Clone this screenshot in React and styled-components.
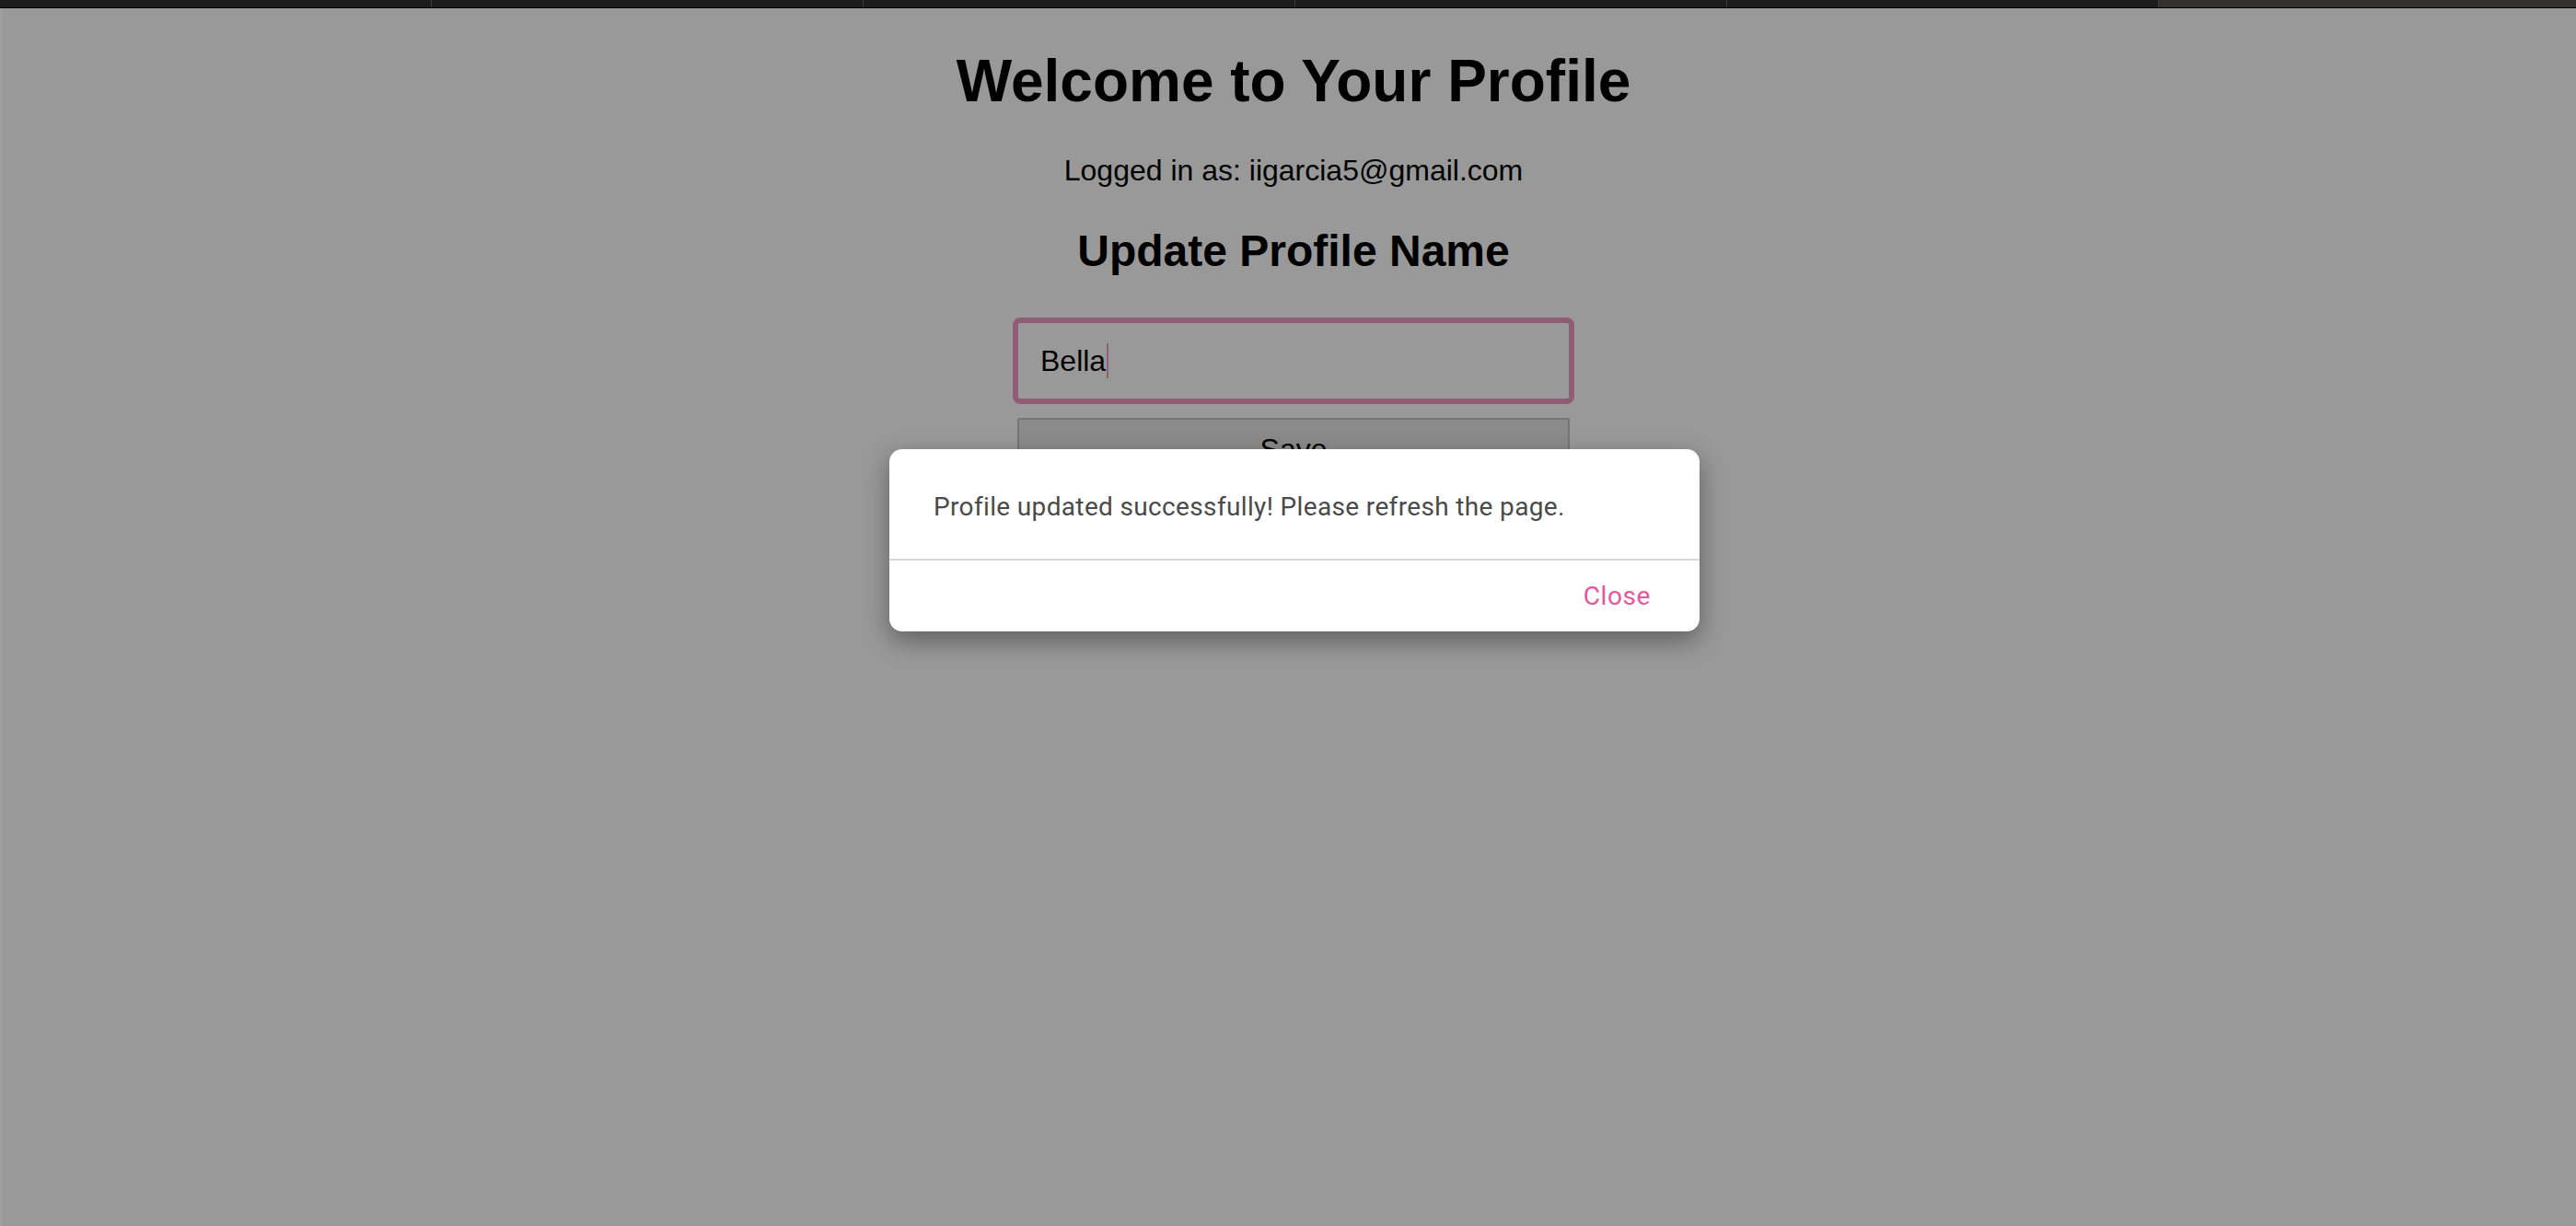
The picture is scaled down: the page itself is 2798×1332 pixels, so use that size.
import React from 'react'
import styled, { createGlobalStyle } from 'styled-components'

const GlobalStyle = createGlobalStyle`
    html, body {
        margin: 0;
        padding: 0;
        height: 100%;
        background: #ffffff;
    }
    #root {
        height: 100%;
    }
`

const Shell = styled.div`
    height: 100vh;
    display: flex;
    flex-direction: column;
    overflow: hidden;
`

const TabStrip = styled.div`
    height: 8px;
    display: flex;
    background: #1b1b1b;
    border-bottom: 1px solid #000;
    flex-shrink: 0;
`

const Tab = styled.div`
    width: ${(p) => (p.$active ? 'auto' : '468px')};
    flex: ${(p) => (p.$active ? 1 : 'none')};
    background: ${(p) => (p.$active ? '#333231' : '#1b1b1b')};
    border-right: ${(p) => (p.$active ? 'none' : '1px solid #3a3a3a')};
`

const Viewport = styled.div`
    flex: 1;
    position: relative;
    background: #ffffff;
`

const Content = styled.main`
    padding: 42px 0 0 12px;
    display: flex;
    flex-direction: column;
    align-items: center;
    font-family: "Liberation Sans", Arial, sans-serif;
    color: #000;
`

const Title = styled.h1`
    margin: 0 0 42px;
    font-size: 64px;
    line-height: 74px;
    font-weight: 700;
`

const LoggedIn = styled.p`
    margin: 0 0 41px;
    font-size: 32px;
    line-height: 37px;
`

const SubTitle = styled.h2`
    margin: 0 0 45px;
    font-size: 48px;
    line-height: 55px;
    font-weight: 700;
`

const Form = styled.form`
    display: flex;
    flex-direction: column;
    align-items: center;
    gap: 15px;
`

const Field = styled.div`
    box-sizing: border-box;
    width: 610px;
    height: 94px;
    border: 6px solid #ee9cc3;
    border-radius: 8px;
    padding: 0 24px;
    display: flex;
    align-items: center;
    font-size: 32px;
    background: #fff;
`

const Caret = styled.span`
    display: inline-block;
    width: 2px;
    height: 38px;
    margin-left: 1px;
    background: #f0a3c6;
`

const SaveButton = styled.button`
    box-sizing: border-box;
    width: 600px;
    padding: 14px 0;
    font-family: "Liberation Sans", Arial, sans-serif;
    font-size: 32px;
    line-height: 37px;
    color: #000;
    background: #e8e8e8;
    border: 2px solid #c4c4c4;
    border-radius: 2px;
`

const Backdrop = styled.div`
    position: absolute;
    inset: 0;
    background: rgba(0, 0, 0, 0.4);
    border-left: 2px solid rgba(255, 255, 255, 0.07);
    display: flex;
    justify-content: center;
    align-items: flex-start;
    padding: 479px 0 0 12px;
`

const Alert = styled.div`
    width: 880px;
    background: #fff;
    border-radius: 14px;
    box-shadow: 0 10px 28px rgba(0, 0, 0, 0.38);
    overflow: hidden;
    font-family: Roboto, "Noto Sans", sans-serif;
`

const Message = styled.p`
    margin: 0;
    padding: 42px 48px 35px;
    font-size: 28px;
    letter-spacing: 0.35px;
    line-height: 42px;
    color: #4a4a4a;
`

const Footer = styled.div`
    height: 77px;
    border-top: 2px solid #d9d9d9;
    display: flex;
    align-items: center;
    justify-content: flex-end;
    padding-right: 53px;
`

const CloseButton = styled.button`
    background: none;
    border: none;
    padding: 0;
    font-family: Roboto, "Noto Sans", sans-serif;
    font-size: 28px;
    letter-spacing: 0.6px;
    color: #e8559b;
    cursor: pointer;
`

export default function App() {
    return (
        <>
            <GlobalStyle />
            <Shell>
                <TabStrip>
                    <Tab />
                    <Tab />
                    <Tab />
                    <Tab />
                    <Tab />
                    <Tab $active />
                </TabStrip>
                <Viewport>
                    <Content>
                        <Title>Welcome to Your Profile</Title>
                        <LoggedIn>Logged in as: iigarcia5@gmail.com</LoggedIn>
                        <SubTitle>Update Profile Name</SubTitle>
                        <Form onSubmit={(e) => e.preventDefault()}>
                            <Field>
                                <span>Bella</span>
                                <Caret />
                            </Field>
                            <SaveButton type="submit">Save</SaveButton>
                        </Form>
                    </Content>
                    <Backdrop>
                        <Alert role="alertdialog">
                            <Message>
                                Profile updated successfully! Please refresh the page.
                            </Message>
                            <Footer>
                                <CloseButton>Close</CloseButton>
                            </Footer>
                        </Alert>
                    </Backdrop>
                </Viewport>
            </Shell>
        </>
    )
}
